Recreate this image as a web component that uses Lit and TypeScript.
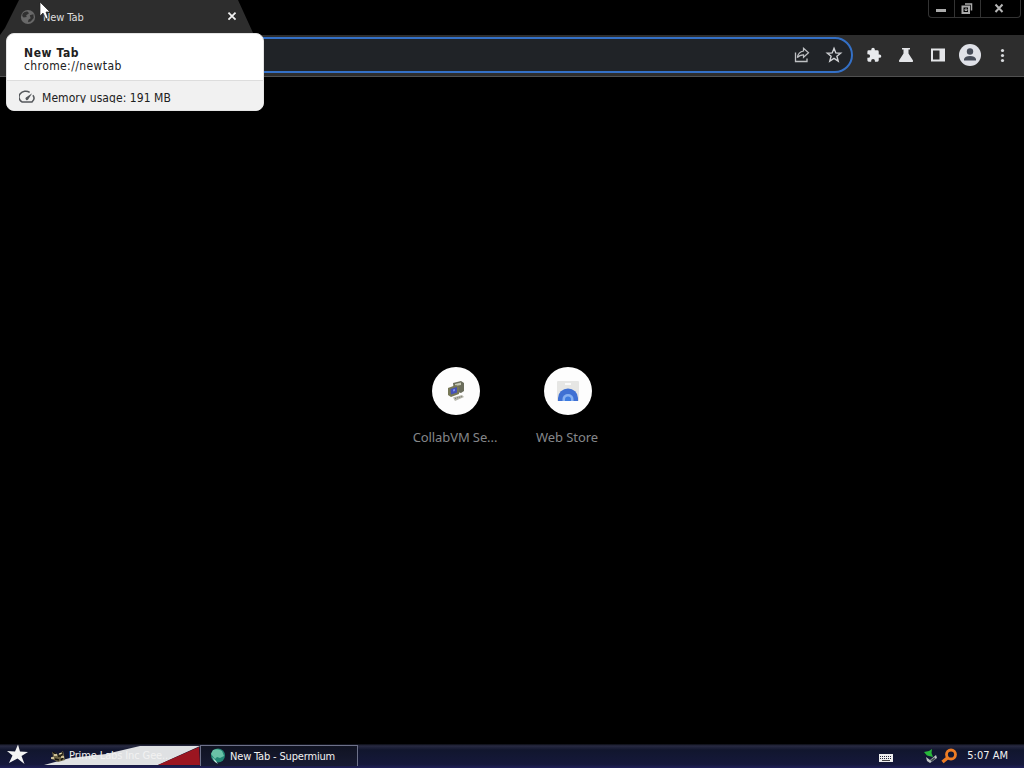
import {LitElement, css, html, svg} from 'lit';
import {customElement, property} from 'lit/decorators.js';

const ICONS: Record<string, unknown> = {
  share: svg`<path d="M2.500 6.500V15.500H14V12.500" fill="none" stroke="#bfc1c4" stroke-width="1.300"/>
    <path d="M10.500 2.300L15.500 6.800L10.500 11.300V8.800C7.500 8.800 5.800 9.700 4.300 11.700C4.900 7.800 7 5.500 10.500 5Z"
      fill="none" stroke="#bfc1c4" stroke-width="1.200"/>`,
  star: svg`<path d="M9 2.300L10.800 6.900L15.700 7.200L11.900 10.300L13.200 15.100L9 12.400L4.800 15.100L6.100 10.300L2.300 7.200L7.200 6.900Z"
      fill="none" stroke="#d0d2d5" stroke-width="1.400"/>`,
  puzzle: svg`<path d="M14.800 8.400H13.900V5.500A1.500 1.500 0 0 0 12.400 4H9.700V3.100A1.900 1.900 0 0 0 5.900 3.100V4H3.200A1.500 1.500 0 0 0 1.700 5.500V8.100H2.600A2 2 0 0 1 2.600 12.100H1.700V14.700A1.500 1.500 0 0 0 3.200 16.200H5.800V15.300A2 2 0 0 1 9.800 15.300V16.200H12.400A1.500 1.500 0 0 0 13.900 14.700V12.100H14.800A1.850 1.850 0 0 0 14.800 8.400Z"
      fill="#e8eaed" transform="translate(.8 .6) scale(.93)"/>`,
  flask: svg`<path d="M5 2H13V3.500H11.500V7.500L16 14.500Q16.500 16 15 16H3Q1.500 16 2 14.500L6.500 7.500V3.500H5Z" fill="#e4e5e8"/>`,
  panel: svg`<path d="M2 2.500H16V15.500H2ZM4 4.500V13.500H10.500V4.500Z" fill="#e4e5e8" fill-rule="evenodd"/>`,
  dots: svg`<g fill="#d8dadd"><circle cx="9.500" cy="4.500" r="1.600"/><circle cx="9.500" cy="9.500" r="1.600"/>
    <circle cx="9.500" cy="14.500" r="1.600"/></g>`,
  gauge: svg`<path d="M12 3.700A7 6 0 0 0 3.300 14.500H14.700A7 6 0 0 0 15.600 7"
      fill="none" stroke="#55585c" stroke-width="1.700"/>
    <path d="M14.800 4.800L7.800 9.500A1.700 1.700 0 1 0 10.300 11.800Z" fill="#55585c"/>`,
  globe: svg`<circle cx="9" cy="9" r="8" fill="#686868"/>
    <path d="M3 5Q6 2 9 3L10 5L7 7L7.500 9L4 9.500L2.500 8ZM11 7L15 6L15.500 10L12 14L9 15L9.500 12L12 10.500Z" fill="#303030"/>`,
  close: svg`<path d="M5 4L13 12M13 4L5 12" stroke="#f0f0f0" stroke-width="2"/>`,
};

@customElement('chrome-icon')
class ChromeIcon extends LitElement {
  @property() name = '';
  @property({type: Number}) size = 18;

  static styles = css`
    :host { display: block; flex: none; }
    svg { display: block; }
  `;

  render() {
    return html`<svg width=${this.size} height=${this.size} viewBox="0 0 18 18">${ICONS[this.name]}</svg>`;
  }
}

@customElement('tab-strip')
class TabStrip extends LitElement {
  static styles = css`
    :host { display: flex; justify-content: space-between; height: 35px; background: #000; }
    .tab {
      box-sizing: border-box; width: 262px; height: 35px; padding: 0 22px 1px 20px;
      display: flex; align-items: center;
      background: #2d2d2d;
      clip-path: polygon(0 100%, 5px 80%, 19px 0, 238px 0, 254px 100%);
      font-size: 11px; color: #dedede;
    }
    .title { flex: 1; padding-left: 7px; letter-spacing: -.1px; }
    .controls {
      box-sizing: border-box; display: flex; width: 93px; height: 18px; margin-right: 3px;
      border: 1px solid #333; border-top: 0; border-radius: 0 0 4px 4px;
    }
    .control { display: flex; justify-content: center; align-items: center; width: 24px; padding-right: 1px; }
    .control + .control { border-left: 1px solid #333; }
    .control.wide { flex: 1; padding: 0 3px 2px 0; }
  `;

  render() {
    return html`
<div class="tab">
  <chrome-icon name="globe" size="16"></chrome-icon>
  <span class="title">New Tab</span>
  <chrome-icon name="close" size="16"></chrome-icon>
</div>
<div class="controls">
  <div class="control"><svg width="12" height="16"><path d="M1 8H11V11H1Z" fill="#aaa"/></svg></div>
  <div class="control">
    <svg width="12" height="16" fill="none" stroke="#aaa">
      <path d="M4 3H10.500V9.500" stroke-width="1.500"/><path d="M1.500 5.500H8V12H1.500Z" stroke-width="2"/>
      <path d="M4 8H6V9.500H4Z"/>
    </svg>
  </div>
  <div class="control wide">
    <svg width="12" height="16"><path d="M2.500 4.500L9.500 12M9.500 4.500L2.500 12" stroke="#b5b5b5" stroke-width="2"/></svg>
  </div>
</div>`;
  }
}

@customElement('nav-toolbar')
class NavToolbar extends LitElement {
  static styles = css`
    :host {
      box-sizing: border-box; display: flex; align-items: center; height: 42px;
      padding: 0 13px 1px 100px; background: #2d2d2d; border-bottom: 1px solid #505050;
    }
    .omnibox {
      box-sizing: border-box; flex: 1; height: 36px; padding-right: 8px;
      display: flex; align-items: center; justify-content: flex-end; gap: 14px;
      background: #202327; border: 2px solid #3470c6; border-radius: 18px;
    }
    .actions { display: flex; align-items: center; gap: 14px; padding-left: 12px; }
    .avatar { display: block; margin: 0 -3px; }
  `;

  render() {
    return html`
<div class="omnibox">
  <chrome-icon name="share"></chrome-icon>
  <chrome-icon name="star"></chrome-icon>
</div>
<div class="actions">
  <chrome-icon name="puzzle"></chrome-icon>
  <chrome-icon name="flask"></chrome-icon>
  <chrome-icon name="panel"></chrome-icon>
  <svg class="avatar" width="24" height="24">
    <circle cx="12" cy="12" r="11" fill="#dfe1e8"/>
    <circle cx="12" cy="8.500" r="3.200" fill="#454b58"/>
    <path d="M6 17.500V16Q7 13 12 13T18 16V17.500Z" fill="#454b58"/>
  </svg>
  <chrome-icon name="dots"></chrome-icon>
</div>`;
  }
}

@customElement('hover-card')
class HoverCard extends LitElement {
  static styles = css`
    :host {
      box-sizing: border-box; display: flex; flex-direction: column; width: 258px; height: 78px;
      background: #fff; border: 1px solid #e4e4e4; border-radius: 8px; overflow: hidden; color: #202020;
    }
    .page { height: 46px; box-sizing: border-box; padding: 13px 17px 0; line-height: 13px; font-size: 12px; }
    .title { font-weight: bold; letter-spacing: .6px; }
    .url { letter-spacing: .4px; }
    .memory {
      box-sizing: border-box; flex: 1; display: flex; align-items: center; gap: 7px; padding: 2px 13px 0 12px;
      background: #f1f1f1; border-top: 1px solid #ddd; font-size: 12px;
    }
    /* short line box, trims the descenders */
    .usage { height: 12px; overflow: hidden; line-height: 14px; white-space: nowrap; letter-spacing: .06px; }
  `;

  render() {
    return html`
<div class="page">
  <div class="title">New Tab</div>
  <div class="url">chrome://newtab</div>
</div>
<div class="memory">
  <chrome-icon name="gauge" size="16"></chrome-icon>
  <div class="usage">Memory usage: 191 MB</div>
</div>`;
  }
}

@customElement('shortcut-tiles')
class ShortcutTiles extends LitElement {
  static styles = css`
    :host { display: flex; justify-content: center; padding-top: 290px; }
    .tile { width: 112px; display: flex; flex-direction: column; align-items: center; gap: 13px; }
    .disc {
      display: flex; justify-content: center; align-items: center;
      width: 48px; height: 48px; border-radius: 50%; background: #fdfdfd;
    }
    .label {
      font: 13px/18px "Noto Sans", sans-serif; color: #85878a; white-space: nowrap;
      letter-spacing: -.1px; padding-right: 2px;
    }
  `;

  render() {
    return html`
<div class="tile">
  <div class="disc">
    <svg width="24" height="24">
      <path d="M9 4L17 2L20 4V12L17 14L10 12Z" fill="#6b6d5c"/>
      <path d="M11 5L17 3.500V6L11 7Z" fill="#c6c8b4"/>
      <path d="M4 9L12 6L15 8V15L7 18L4 16Z" fill="#777857"/>
      <path d="M6.500 10L13 8V13.500L7 15.500Z" fill="#4652b8"/>
      <path d="M9 10.500L11 10V12L9 12.500Z" fill="#7c91ef"/>
      <path d="M9 18.500L18 16L20 18L11 22Z" fill="#b5b5aa"/>
      <path d="M11 19.500L18 17.500" stroke="#77776c" stroke-dasharray="1 1"/>
    </svg>
  </div>
  <div class="label">CollabVM Se...</div>
</div>
<div class="tile">
  <div class="disc">
    <svg width="24" height="24">
      <path d="M1 3Q1 2 2 2H22Q23 2 23 3V22H1Z" fill="#e6e6e4"/>
      <path d="M9 5H15" stroke="#fafafa" stroke-width="2"/>
      <path d="M2 22V19A10 9.500 0 0 1 22 19V22Z" fill="#3f70d3"/>
      <path d="M6.500 22V20A5.500 5 0 0 1 17.500 20V22Z" fill="#86b0f1"/>
      <path d="M9 22V20.500A3 3 0 0 1 15 20.500V22Z" fill="#3c7be0"/>
    </svg>
  </div>
  <div class="label">Web Store</div>
</div>`;
  }
}

@customElement('task-bar')
class TaskBar extends LitElement {
  static styles = css`
    :host {
      box-sizing: border-box; display: flex; height: 24px; color: #f2f2f2; font-size: 11px;
      background: linear-gradient(#0a0b12, #282a42 8%, #11162e 25%, #15183b 85%, #20205a);
    }
    svg { display: block; flex: none; }
    .prime { display: grid; width: 160px; }
    .prime > * { grid-area: 1 / 1; }
    .row { display: flex; align-items: center; padding: 0 0 1px 10px; gap: 3px; z-index: 1; }
    .task { white-space: nowrap; }
    .prime .task { letter-spacing: -.12px; }
    .current {
      box-sizing: border-box; width: 158px; height: 21px; margin-top: 1px;
      display: flex; align-items: center; gap: 4px; padding: 0 0 0 9px;
      border: solid #6d7189; border-width: 1px 1px 0;
      background: linear-gradient(#101322, #171a32);
    }
    .current .task { letter-spacing: -.17px; }
    .tray { margin-left: auto; display: flex; align-items: center; padding: 0 16px 1px 0; }
    .clock { padding-left: 9px; white-space: nowrap; }
    .keyboard { margin-right: 31px; }
  `;

  render() {
    return html`
<svg width="40" height="24">
  <path d="M18 .500L20 7.500L28 8L21.500 12L24.500 20L17.500 14.500L9 19L12.500 11.500L7 7L15 7.500Z" fill="#f5f5f5"/>
</svg>
<div class="prime">
  <svg width="160" height="24">
    <path d="M4 21L30 14L66 10L100 2H160L118 21Z" fill="#dfe1e3"/>
    <path d="M159 3L118 21H160Z" fill="#9b1520"/>
  </svg>
  <div class="row">
    <svg width="16" height="16">
      <path d="M2 4L6 5L8 7L13 3L14 7L15 12L8 14L4 12L1 11L3 8Z" fill="#6d6446"/>
      <path d="M3 4L6 6M8 8H12M5 11L9 12M12 4V7M11 12L13 10" stroke="#15130f" stroke-width="1.500"/>
      <path d="M4 7H7M11 9H14M1 10H4M9 6L12 5" stroke="#eee0b3" stroke-width="1.300"/>
    </svg>
    <span class="task">Prime Labs Inc Gee...</span>
  </div>
</div>
<div class="current">
  <svg width="16" height="16">
    <circle cx="8" cy="7.500" r="7" fill="#238875"/>
    <path d="M3 2Q8 0 12 3L14 8L10 10L7 9L5 11L1 6Z" fill="#6ac3a7"/>
    <path d="M2 9L6 13L8 16L5 14Z" fill="#cae9df"/>
  </svg>
  <span class="task">New Tab - Supermium</span>
</div>
<div class="tray">
  <svg class="keyboard" width="14" height="14">
    <path d="M0 5H14V13H0Z" fill="#eee"/>
    <path d="M1 7.500H13M1 9.500H13" stroke="#282a3b" stroke-dasharray="1 1"/><path d="M3 11.500H11" stroke="#444"/>
  </svg>
  <svg width="16" height="16">
    <path d="M2 9L6 12L12 7L13 10L6 15L3 13Z" fill="#bfc5c5"/>
    <path d="M7 13L11 10" stroke="#475156" stroke-width="2"/>
    <path d="M0 4L5 3L8 1L7.500 5L9 9L3 7.500Z" fill="#28b83b"/>
  </svg>
  <svg width="18" height="16">
    <circle cx="11" cy="6.500" r="4.500" fill="none" stroke="#ed7c24" stroke-width="2.800"/>
    <path d="M8 9.500L2.500 14" stroke="#ed7c24" stroke-width="3.500"/>
  </svg>
  <span class="clock">5:07 AM</span>
</div>`;
  }
}

@customElement('app-root')
class AppRoot extends LitElement {
  static styles = css`
    :host {
      position: relative; display: flex; flex-direction: column; height: 768px; overflow: hidden;
      background: #000; font-family: "DejaVu Sans Condensed", "DejaVu Sans", sans-serif; font-stretch: condensed;
    }
    .page { flex: 1; }
    .card { position: absolute; left: 6px; top: 33px; }
    .cursor { position: absolute; left: 39px; top: 1px; }
  `;

  render() {
    return html`
<tab-strip></tab-strip>
<nav-toolbar></nav-toolbar>
<shortcut-tiles class="page"></shortcut-tiles>
<task-bar></task-bar>
<hover-card class="card"></hover-card>
<svg class="cursor" width="14" height="20">
  <path d="M1 1V15L4 12L7 18L9 17L7 11H11Z" fill="#fff" stroke="#222" stroke-width=".7"/>
</svg>`;
  }
}
